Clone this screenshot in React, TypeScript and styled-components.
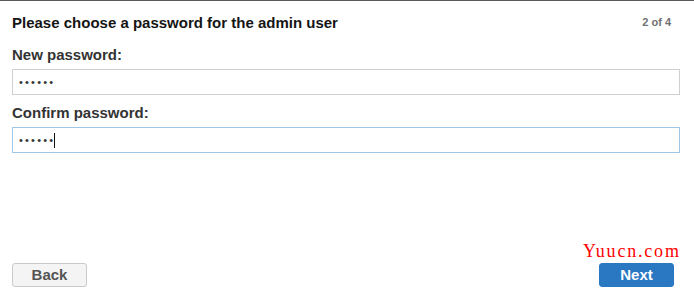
import React from "react";
import styled, { createGlobalStyle } from "styled-components";

const Global = createGlobalStyle`
  html, body { margin: 0; padding: 0; background: #fff; }
  body { font-family: "Liberation Sans", Arial, sans-serif; }
`;

const Page = styled.div`
  position: relative;
  box-sizing: border-box;
  width: 694px;
  height: 306px;
  border-top: 1px solid #5a5a5a;
  padding: 12px 14px 19px 12px;
  display: flex;
  flex-direction: column;
`;

const Header = styled.div`
  display: flex;
  justify-content: space-between;
  align-items: center;
  height: 20px;
`;

const Title = styled.h1`
  margin: 0;
  font-size: 15px;
  font-weight: 700;
  color: #151515;
  line-height: 20px;
`;

const Step = styled.span`
  font-size: 11px;
  font-weight: 700;
  color: #707070;
  margin-right: 9px;
  margin-top: -2px;
`;

const Field = styled.div<{ $first?: boolean }>`
  display: flex;
  flex-direction: column;
  gap: 4px;
  margin-top: ${(p) => (p.$first ? "12px" : "8px")};
`;

const Label = styled.label`
  font-size: 15px;
  font-weight: 700;
  color: #333;
  line-height: 20px;
`;

const Input = styled.div<{ $focused?: boolean }>`
  box-sizing: border-box;
  height: 26px;
  border: 1px solid ${(p) => (p.$focused ? "#9fc6e6" : "#cfcfcf")};
  padding: 0 6px;
  display: flex;
  align-items: center;
  background: #fff;
`;

const Dots = styled.span`
  font-size: 11px;
  letter-spacing: 2.2px;
  color: #333;
  line-height: 1;
`;

const Caret = styled.span`
  display: inline-block;
  width: 1px;
  height: 15px;
  background: #111;
  margin-left: -1px;
`;

const Footer = styled.div`
  margin-top: auto;
  display: flex;
  justify-content: space-between;
  padding-right: 6px;
`;

const Button = styled.button<{ $primary?: boolean }>`
  box-sizing: border-box;
  width: 75px;
  height: 24px;
  border-radius: 3px;
  border: 1px solid ${(p) => (p.$primary ? "#2a78c2" : "#c9c9c9")};
  background: ${(p) => (p.$primary ? "#2a78c2" : "#f4f4f4")};
  color: ${(p) => (p.$primary ? "#fff" : "#555")};
  font-family: "Liberation Sans", Arial, sans-serif;
  font-size: 15px;
  font-weight: 700;
  padding: 0;
  line-height: 22px;
  cursor: pointer;
`;

const Watermark = styled.span`
  position: absolute;
  left: 583px;
  top: 240px;
  font-family: "Liberation Serif", "Times New Roman", serif;
  font-size: 18px;
  letter-spacing: 1.8px;
  color: #ff0000;
  line-height: 20px;
`;

export default function App() {
  return (
    <>
      <Global />
      <Page>
        <Header>
          <Title>Please choose a password for the admin user</Title>
          <Step>2 of 4</Step>
        </Header>
        <Field $first>
          <Label>New password:</Label>
          <Input>
            <Dots>••••••</Dots>
          </Input>
        </Field>
        <Field>
          <Label>Confirm password:</Label>
          <Input $focused>
            <Dots>••••••</Dots>
            <Caret />
          </Input>
        </Field>
        <Footer>
          <Button>Back</Button>
          <Button $primary>Next</Button>
        </Footer>
        <Watermark>Yuucn.com</Watermark>
      </Page>
    </>
  );
}
